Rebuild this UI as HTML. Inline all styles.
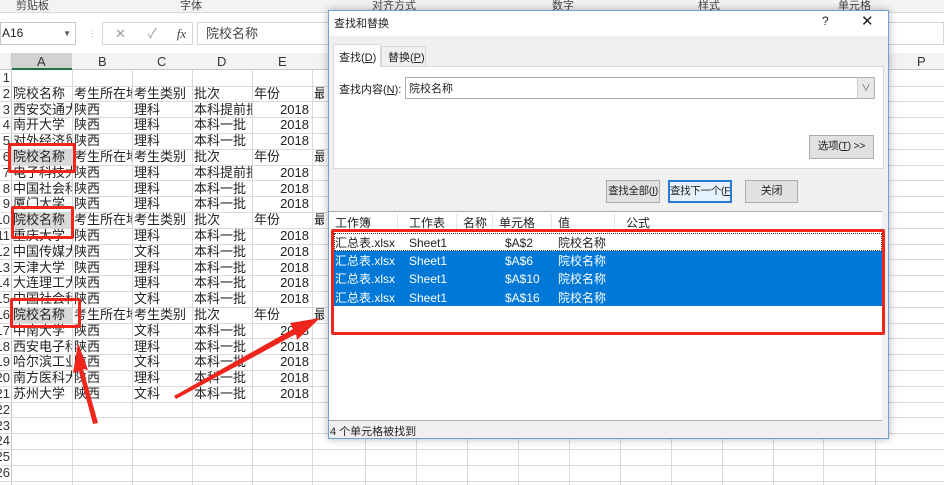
<!DOCTYPE html>
<html><head><meta charset="utf-8"><style>
*{margin:0;padding:0;box-sizing:border-box}
body{width:944px;height:485px;overflow:hidden;position:relative;background:#fff;font-family:"Liberation Sans","Noto Sans CJK SC",sans-serif;font-size:13px;color:#222}
.a{position:absolute}
.cell{position:absolute;height:16px;line-height:16px;white-space:nowrap;overflow:hidden;font-size:13px;padding-left:2px}
.rn{position:absolute;left:0;width:11px;height:16px;line-height:16px;overflow:hidden;font-size:13px;color:#333}
.rn span{position:absolute;right:1px;top:0}
.hl{position:absolute;top:0;width:1px;height:485px;background:#dadada}
.vl{position:absolute;left:0;width:944px;height:1px;background:#dadada}
.red{position:absolute;border:3px solid #f0261c;border-radius:2px}
.btn{position:absolute;background:#e1e1e1;border:1px solid #adadad;font-size:10.5px;text-align:center;line-height:21px;white-space:nowrap;overflow:hidden;letter-spacing:-0.3px}
.dl{font-size:11px;white-space:nowrap}
</style></head><body>
<div class="a" style="left:0;top:0;width:944px;height:13px;background:#f3f3f3;border-bottom:1px solid #d8d8d8"></div>
<div class="a dl" style="left:16px;top:-3px;color:#444">剪贴板</div>
<div class="a dl" style="left:180px;top:-3px;color:#444">字体</div>
<div class="a dl" style="left:372px;top:-3px;color:#444">对齐方式</div>
<div class="a dl" style="left:552px;top:-3px;color:#444">数字</div>
<div class="a dl" style="left:698px;top:-3px;color:#444">样式</div>
<div class="a dl" style="left:838px;top:-3px;color:#444">单元格</div>
<div class="a" style="left:90px;top:0;width:1px;height:12px;background:#ccc"></div>
<div class="a" style="left:304px;top:0;width:1px;height:12px;background:#ccc"></div>
<div class="a" style="left:0;top:14px;width:944px;height:39px;background:#fff"></div>
<div class="a" style="left:0;top:22px;width:76px;height:23px;border:1px solid #c6c6c6;font-size:12px;line-height:21px;padding-left:1px">A16<span style="position:absolute;right:4px;font-size:8px;color:#555">▼</span></div>
<div class="a" style="left:88px;top:28px;color:#aaa;font-size:9px">⋮</div>
<div class="a" style="left:102px;top:22px;width:91px;height:23px;border:1px solid #d6d6d6;color:#999;font-size:13px;line-height:21px"><span style="margin-left:12px">✕</span><span style="margin-left:22px">✓</span><span style="margin-left:20px;font-style:italic;font-family:'Liberation Serif',serif;color:#444">fx</span></div>
<div class="a" style="left:197px;top:22px;width:747px;height:23px;border:1px solid #d6d6d6;line-height:21px;padding-left:8px;color:#444">院校名称</div>
<div class="hl" style="left:72px"></div><div class="hl" style="left:132px"></div>
<div class="hl" style="left:192px"></div><div class="hl" style="left:252px"></div>
<div class="hl" style="left:312px"></div><div class="hl" style="left:365px"></div>
<div class="hl" style="left:416px"></div><div class="hl" style="left:467px"></div>
<div class="hl" style="left:518px"></div><div class="hl" style="left:569px"></div>
<div class="hl" style="left:620px"></div><div class="hl" style="left:671px"></div>
<div class="hl" style="left:722px"></div><div class="hl" style="left:773px"></div>
<div class="hl" style="left:823px"></div><div class="hl" style="left:875px"></div>
<div class="a" style="left:0;top:0;width:944px;height:53px;background:#fff"></div>
<div class="a" style="left:0;top:0;width:944px;height:13px;background:#f3f3f3;border-bottom:1px solid #d8d8d8"></div>
<div class="a dl" style="left:16px;top:-3px;color:#444">剪贴板</div>
<div class="a dl" style="left:180px;top:-3px;color:#444">字体</div>
<div class="a dl" style="left:372px;top:-3px;color:#444">对齐方式</div>
<div class="a dl" style="left:552px;top:-3px;color:#444">数字</div>
<div class="a dl" style="left:698px;top:-3px;color:#444">样式</div>
<div class="a dl" style="left:838px;top:-3px;color:#444">单元格</div>
<div class="a" style="left:0;top:22px;width:76px;height:23px;border:1px solid #c6c6c6;font-size:12px;line-height:21px;padding-left:1px">A16<span style="position:absolute;right:4px;font-size:8px;color:#555">▼</span></div>
<div class="a" style="left:88px;top:28px;color:#aaa;font-size:9px">⋮</div>
<div class="a" style="left:102px;top:22px;width:91px;height:23px;border:1px solid #d6d6d6;color:#999;font-size:13px;line-height:21px"><span style="margin-left:12px">✕</span><span style="margin-left:22px">✓</span><span style="margin-left:20px;font-style:italic;font-family:'Liberation Serif',serif;color:#444">fx</span></div>
<div class="a" style="left:197px;top:22px;width:747px;height:23px;border:1px solid #d6d6d6;line-height:21px;padding-left:8px;color:#444">院校名称</div>
<div class="a" style="left:0;top:53px;width:944px;height:17px;background:#f3f3f3;border-bottom:1px solid #c8c8c8"></div>
<div class="a" style="left:11px;top:53px;width:61px;height:17px;background:#d2d2d2;border-bottom:2px solid #217346"></div>
<div class="a" style="left:37px;top:54px;color:#333">A</div>
<div class="a" style="left:98px;top:54px;color:#333">B</div>
<div class="a" style="left:157px;top:54px;color:#333">C</div>
<div class="a" style="left:217px;top:54px;color:#333">D</div>
<div class="a" style="left:278px;top:54px;color:#333">E</div>
<div class="a" style="left:917px;top:54px;color:#333">P</div>
<div class="a" style="left:11px;top:53px;width:1px;height:432px;background:#c8c8c8"></div>
<div id="rows"></div>
<script>
var d=[[],["院校名称","考生所在地","考生类别","批次","年份","最"],["西安交通大学","陕西","理科","本科提前批","2018"],["南开大学","陕西","理科","本科一批","2018"],["对外经济贸易","陕西","理科","本科一批","2018"],["院校名称","考生所在地","考生类别","批次","年份","最"],["电子科技大学","陕西","理科","本科提前批","2018"],["中国社会科学","陕西","理科","本科一批","2018"],["厦门大学","陕西","理科","本科一批","2018"],["院校名称","考生所在地","考生类别","批次","年份","最"],["重庆大学","陕西","理科","本科一批","2018"],["中国传媒大学","陕西","文科","本科一批","2018"],["天津大学","陕西","理科","本科一批","2018"],["大连理工大学","陕西","理科","本科一批","2018"],["中国社会科学","陕西","文科","本科一批","2018"],["院校名称","考生所在地","考生类别","批次","年份","最"],["中南大学","陕西","文科","本科一批","2018"],["西安电子科技","陕西","理科","本科一批","2018"],["哈尔滨工业","陕西","文科","本科一批","2018"],["南方医科大学","陕西","理科","本科一批","2018"],["苏州大学","陕西","文科","本科一批","2018"]];
var xs=[11,72,132,192,252,312],ws=[61,60,60,60,60,12],h="";
for(var i=0;i<26;i++){var t=70+i*15.8;h+='<div class="vl" style="top:'+(t+15.5)+'px"></div><div class="rn" style="top:'+t+'px"><span>'+(i+1)+'</span></div>';
var r=d[i]||[];for(var j=0;j<r.length;j++){var st='left:'+xs[j]+'px;top:'+t+'px;width:'+ws[j]+'px;';if(j==4&&r[j]=="2018")st+='text-align:right;padding-right:3px;';if((i==5||i==9||i==15)&&j==0)st+='background:#d9d9d9;';h+='<div class="cell" style="'+st+'">'+r[j]+'</div>';}}
document.getElementById("rows").innerHTML=h;
</script>
<div class="red" style="left:8px;top:143px;width:68px;height:30px"></div>
<div class="red" style="left:11px;top:206px;width:63px;height:33px"></div>
<div class="red" style="left:10px;top:298px;width:71px;height:30px"></div>
<svg class="a" style="left:0;top:0" width="944" height="485"><g fill="#f0261c">
<polygon points="78,343 88,370 83,369 98,423 93,424 79,371 73,373"/>
<polygon points="320,318 297,340 296,334 176,399 174,396 293,329 290,323"/>
</g></svg>
<div class="a" style="left:328px;top:10px;width:561px;height:429px;background:#f0f0f0;border:1px solid #6fa3d8;box-shadow:0 0 8px rgba(0,0,0,.3)"></div>
<div class="a" style="left:329px;top:11px;width:559px;height:25px;background:#fff"></div>
<div class="a dl" style="left:334px;top:15px">查找和替换</div>
<div class="a" style="left:822px;top:14px;font-size:12px">?</div>
<div class="a" style="left:861px;top:12px;font-size:15px">✕</div>
<div class="a" style="left:333px;top:66px;width:551px;height:103px;background:#fff;border:1px solid #d9d9d9"></div>
<div class="a" style="left:333px;top:44px;width:48px;height:23px;background:#fff;border:1px solid #d9d9d9;border-bottom:none"></div>
<div class="a dl" style="left:339px;top:49px">查找(<u>D</u>)</div>
<div class="a" style="left:381px;top:46px;width:45px;height:20px;background:#f0f0f0;border:1px solid #d9d9d9;border-bottom:none"></div>
<div class="a dl" style="left:388px;top:49px">替换(<u>P</u>)</div>
<div class="a dl" style="left:339px;top:81px">查找内容(<u>N</u>):</div>
<div class="a dl" style="left:405px;top:77px;width:470px;height:22px;background:#fff;border:1px solid #adadad;padding:2px 3px">院校名称</div>
<div class="a" style="left:857px;top:78px;width:17px;height:20px;background:#e8e8e8;border-left:1px solid #ccc;font-size:9px;text-align:center;line-height:20px;color:#555">∨</div>
<div class="btn" style="left:809px;top:135px;width:65px;height:24px">选项(<u>T</u>) &gt;&gt;</div>
<div class="btn" style="left:606px;top:180px;width:54px;height:23px">查找全部(<u>I</u>)</div>
<div class="btn" style="left:668px;top:180px;width:64px;height:23px;border:2px solid #2a7ad5;background:#e5f1fb;line-height:19px">查找下一个(<u>F</u>)</div>
<div class="btn" style="left:745px;top:180px;width:53px;height:23px;font-size:11px">关闭</div>
<div class="a" style="left:329px;top:211px;width:553px;height:210px;background:#fff;border-top:1px solid #aaa;border-bottom:1px solid #aaa"></div>
<div class="a" style="left:335px;top:214px;font-size:12px">工作簿</div>
<div class="a" style="left:397px;top:214px;width:1px;height:16px;background:#e5e5e5"></div>
<div class="a" style="left:409px;top:214px;font-size:12px">工作表</div>
<div class="a" style="left:456px;top:214px;width:1px;height:16px;background:#e5e5e5"></div>
<div class="a" style="left:463px;top:214px;font-size:12px">名称</div>
<div class="a" style="left:492px;top:214px;width:1px;height:16px;background:#e5e5e5"></div>
<div class="a" style="left:499px;top:214px;font-size:12px">单元格</div>
<div class="a" style="left:551px;top:214px;width:1px;height:16px;background:#e5e5e5"></div>
<div class="a" style="left:558px;top:214px;font-size:12px">值</div>
<div class="a" style="left:614px;top:214px;width:1px;height:16px;background:#e5e5e5"></div>
<div class="a" style="left:626px;top:214px;font-size:12px">公式</div>
<div class="a" style="left:334px;top:233px;width:548px;height:18px;border:1px dotted #333"></div>
<div class="a" style="left:334px;top:251px;width:548px;height:55px;background:#0078d7"></div>
<div class="a" style="left:335px;top:234px;font-size:12px;line-height:18px">汇总表.xlsx</div>
<div class="a" style="left:409px;top:234px;font-size:12px;line-height:18px">Sheet1</div>
<div class="a" style="left:505px;top:234px;font-size:12px;line-height:18px">$A$2</div>
<div class="a" style="left:558px;top:234px;font-size:12px;line-height:18px">院校名称</div>
<div class="a" style="left:335px;top:252px;font-size:12px;line-height:18.3px;color:#fff">汇总表.xlsx<br>汇总表.xlsx<br>汇总表.xlsx</div>
<div class="a" style="left:409px;top:252px;font-size:12px;line-height:18.3px;color:#fff">Sheet1<br>Sheet1<br>Sheet1</div>
<div class="a" style="left:505px;top:252px;font-size:12px;line-height:18.3px;color:#fff">$A$6<br>$A$10<br>$A$16</div>
<div class="a" style="left:558px;top:252px;font-size:12px;line-height:18.3px;color:#fff">院校名称<br>院校名称<br>院校名称</div>
<div class="red" style="left:331px;top:229px;width:554px;height:106px"></div>
<div class="a dl" style="left:330px;top:423px">4 个单元格被找到</div>
</body></html>
